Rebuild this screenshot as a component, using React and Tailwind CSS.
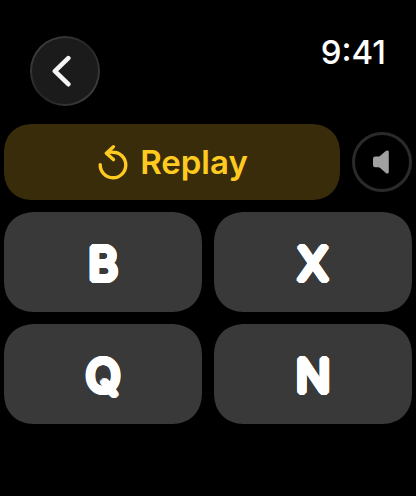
const LETTERS = ["B", "X", "Q", "N"];

function BackIcon() {
  return (
    <svg viewBox="0 0 24 32" className="h-8 w-6" fill="none" aria-hidden="true">
      <path d="M17.3 3.2 3.9 16.2 17.3 29.2" stroke="#f4f4f4" strokeWidth="4.6" strokeLinecap="round" strokeLinejoin="round" />
    </svg>
  );
}

function ReplayIcon() {
  return (
    <svg viewBox="0 0 30 36" className="h-9 w-[30px]" fill="none" stroke="currentColor" strokeWidth="3.4" strokeLinecap="round" strokeLinejoin="round" aria-hidden="true">
      <path d="M2.2 19.8A12.8 12.8 0 1 0 15 7.2Q12 7 8.8 8" />
      <path d="M15.4 1.8 8.4 8.2 15.4 14.6" />
    </svg>
  );
}

function SpeakerIcon() {
  return (
    <svg viewBox="0 0 18 24" className="h-6 w-[18px]" fill="#a1a1a1" aria-hidden="true">
      <path d="M3.3 6.6H6.3Q7.2 6.6 7.9 6L13.8 1Q14.8.3 15.8.5 16.8.8 16.8 2V22Q16.8 23.2 15.8 23.5 14.8 23.7 13.8 22.9L7.9 17.8Q7.2 17.2 6.3 17.2H3.3Q1 17.2 1 15V8.8Q1 6.6 3.3 6.6Z" />
    </svg>
  );
}

export default function App() {
  return (
    <main className="min-h-screen bg-black font-['Inter',sans-serif] text-white">
      <header className="flex items-start justify-between px-[30px] pt-9">
        <button aria-label="Back" className="flex size-[70px] items-center justify-center rounded-full bg-linear-to-br from-[#454545] via-[#252525] to-[#454545] p-[2px]">
          <span className="flex size-full items-center justify-center rounded-full bg-[#1b1b1b] pr-1">
            <BackIcon />
          </span>
        </button>
        <time className="text-[33px] leading-8 font-medium">9:41</time>
      </header>
      <section className="px-1 pt-[18px]">
        <div className="flex items-center gap-3">
          <button className="flex h-[76px] flex-1 items-center justify-center gap-3 rounded-[30px] bg-[#392c0a] pt-px pl-0.5 text-[33px] font-semibold text-[#ffcb20] [corner-shape:superellipse(1.2)]">
            <ReplayIcon />
            Replay
          </button>
          <button aria-label="Sound" className="flex size-[60px] items-center justify-center rounded-full border-[3px] border-[#2a2a2a] pr-0.5">
            <SpeakerIcon />
          </button>
        </div>
        <div className="mt-3 grid grid-cols-2 gap-3">
          {LETTERS.map((letter) => (
            <button
              key={letter}
              className="flex h-[100px] items-center justify-center rounded-[32px] bg-[#393939] pt-1 text-[45px] font-light [corner-shape:superellipse(1.2)] [text-shadow:3px_0_white,3px_1px_white,2px_2px_white,1px_3px_white,0_3px_white,-1px_3px_white,-2px_2px_white,-3px_1px_white,-3px_0_white,-3px_-1px_white,-2px_-2px_white,-1px_-3px_white,0_-3px_white,1px_-3px_white,2px_-2px_white,3px_-1px_white,1px_0_white,-1px_0_white,0_1px_white,0_-1px_white]"
            >
              {letter}
            </button>
          ))}
        </div>
      </section>
    </main>
  );
}
